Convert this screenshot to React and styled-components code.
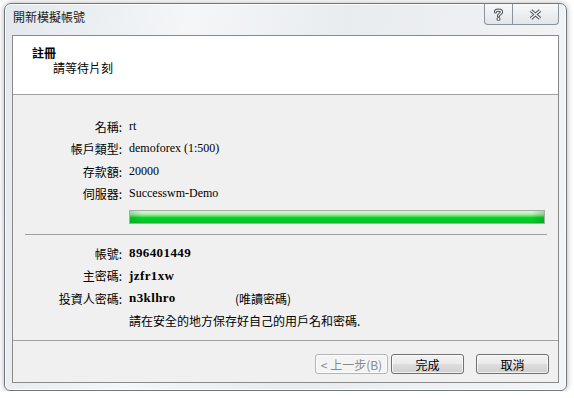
import { Fragment } from "react";
import styled, { createGlobalStyle } from "styled-components";

const Global = createGlobalStyle`
  body {
    margin: 0;
    background: #fff;
    font-family: "Noto Sans CJK TC", "Noto Sans", sans-serif;
    font-size: 12px;
    color: #000;
  }
`;

const Window = styled.div`
  margin: 3px 0 0 4px;
  width: 563px;
  height: 388px;
  box-sizing: border-box;
  border: 1px solid #6e7680;
  border-radius: 7px 7px 6px 6px;
  background: linear-gradient(100deg, #e4e8ec 0%, #f4f6f8 30%, #e9ecef 55%, #f3f4f6 100%);
  box-shadow: 0 0 6px rgba(0, 0, 0, 0.3), inset 0 0 0 1px rgba(255, 255, 255, 0.8);
  padding: 0 7px 7px;
  display: flex;
  flex-direction: column;
`;

const TitleBar = styled.div`
  height: 31px;
  display: flex;
  align-items: flex-start;
  justify-content: space-between;
`;

const Title = styled.div`
  padding: 5px 0 0 1px;
  font-size: 12px;
  line-height: 16px;
  color: #1a1a1a;
`;

const Caption = styled.div`
  display: flex;
`;

const CapButton = styled.div`
  width: ${(p) => p.$w}px;
  height: 21px;
  box-sizing: border-box;
  border: 1px solid #8d939b;
  border-top: none;
  border-left: ${(p) => (p.$first ? "1px solid #8d939b" : "none")};
  border-radius: ${(p) => (p.$first ? "0 0 0 4px" : "0 0 4px 0")};
  background: linear-gradient(#f8f9fa, #eceef1 50%, #e2e5e9);
  display: flex;
  align-items: center;
  justify-content: center;
`;

const Client = styled.div`
  flex: 1;
  border: 1px solid #8a8a8a;
  background: #f0f0f0;
  display: flex;
  flex-direction: column;
`;

const Header = styled.div`
  height: 59px;
  box-sizing: border-box;
  background: #fff;
  border-bottom: 1px solid #a0a0a0;
  padding: 9px 0 0 19px;
`;

const HeadTitle = styled.div`
  font-weight: bold;
  font-size: 12px;
  line-height: 15px;
`;

const HeadSub = styled.div`
  padding-left: 21px;
  font-size: 12px;
  line-height: 15px;
`;

const Body = styled.div`
  flex: 1;
  padding-top: 20px;
`;

const Form = styled.div`
  display: grid;
  grid-template-columns: 109px 1fr;
  grid-auto-rows: 22.5px;
  column-gap: 7px;
  align-items: center;
`;

const Label = styled.div`
  text-align: right;
  white-space: nowrap;
`;

const Value = styled.div`
  font-family: "Liberation Serif", "Noto Sans CJK TC", serif;
  font-size: ${(p) => (p.$bold ? "13px" : "12px")};
  font-weight: ${(p) => (p.$bold ? "bold" : "normal")};
  letter-spacing: ${(p) => (p.$bold ? "0.4px" : "0")};
  display: flex;
  align-items: center;
`;

const Secret = styled.span`
  width: 106px;
`;

const Note = styled.span`
  font-family: "Noto Sans CJK TC", sans-serif;
  font-weight: normal;
  font-size: 12px;
  letter-spacing: 0;
`;

const Notice = styled.div`
  font-size: 12px;
  white-space: nowrap;
`;

const Progress = styled.div`
  margin: 5px 0 0 116px;
  width: 416px;
  height: 14px;
  box-sizing: border-box;
  border: 1px solid #a9aaa9;
  background:
    linear-gradient(90deg, rgba(0, 80, 0, 0.18), rgba(0, 0, 0, 0) 3%, rgba(0, 0, 0, 0) 97%, rgba(0, 80, 0, 0.2)),
    linear-gradient(#d6f8d2 0%, #b4f0b1 25%, #4fde5c 45%, #06d22a 55%, #04c925 85%, #17b42f 100%);
`;

const Rule = styled.div`
  height: 1px;
  background: #a0a0a0;
  margin: ${(p) => p.$m || "0"};
`;

const Footer = styled.div`
  height: 42px;
  box-sizing: border-box;
  border-top: 1px solid #a0a0a0;
  display: flex;
  justify-content: flex-end;
  align-items: flex-start;
  padding: 13px 9px 0 0;
`;

const Button = styled.div`
  width: 73px;
  height: 20px;
  box-sizing: border-box;
  margin-left: ${(p) => p.$gap || 0}px;
  border: 1px solid ${(p) => (p.$disabled ? "#b2b6ba" : "#707070")};
  border-radius: 3px;
  background: ${(p) =>
    p.$disabled
      ? "#f4f4f4"
      : "linear-gradient(#f2f2f2 0%, #ebebeb 48%, #dddddd 52%, #cfcfcf 100%)"};
  box-shadow: inset 0 0 0 1px rgba(255, 255, 255, 0.7);
  color: ${(p) => (p.$disabled ? "#8a8a8a" : "#000")};
  font-size: 12px;
  display: flex;
  align-items: center;
  justify-content: center;
`;

// outlined glyphs of the Aero caption buttons
const HelpIcon = () => (
  <svg width="11" height="13" viewBox="0 0 11 13">
    <path d="M2.5 4 C2.5 1.5 8.5 1.5 8.5 4 C8.5 6 5.5 6 5.5 8" fill="none" stroke="#4b5059" strokeWidth="3.2" strokeLinecap="round" />
    <path d="M2.5 4 C2.5 1.5 8.5 1.5 8.5 4 C8.5 6 5.5 6 5.5 8" fill="none" stroke="#f4f5f7" strokeWidth="1.2" strokeLinecap="round" />
    <circle cx="5.5" cy="11" r="1.6" fill="#f4f5f7" stroke="#4b5059" strokeWidth="1" />
  </svg>
);

const CloseIcon = () => (
  <svg width="13" height="11" viewBox="0 0 13 11">
    <path d="M2 1.5 L11 9.5 M11 1.5 L2 9.5" fill="none" stroke="#4b5059" strokeWidth="3.4" />
    <path d="M2 1.5 L11 9.5 M11 1.5 L2 9.5" fill="none" stroke="#f4f5f7" strokeWidth="1.4" />
  </svg>
);

const rows1 = [
  ["名稱:", "rt"],
  ["帳戶類型:", "demoforex (1:500)"],
  ["存款額:", "20000"],
  ["伺服器:", "Successwm-Demo"],
];

export default function App() {
  return (
    <>
      <Global />
      <Window>
        <TitleBar>
          <Title>開新模擬帳號</Title>
          <Caption>
            <CapButton $w={29} $first><HelpIcon /></CapButton>
            <CapButton $w={46}><CloseIcon /></CapButton>
          </Caption>
        </TitleBar>
        <Client>
          <Header>
            <HeadTitle>註冊</HeadTitle>
            <HeadSub>請等待片刻</HeadSub>
          </Header>
          <Body>
            <Form>
              {rows1.map(([k, v]) => (
                <Fragment key={k}>
                  <Label>{k}</Label>
                  <Value>{v}</Value>
                </Fragment>
              ))}
            </Form>
            <Progress />
            <Rule $m="10px 11px 7px 12px" />
            <Form>
              <Label>帳號:</Label>
              <Value $bold>896401449</Value>
              <Label>主密碼:</Label>
              <Value $bold>jzfr1xw</Value>
              <Label>投資人密碼:</Label>
              <Value $bold>
                <Secret>n3klhro</Secret>
                <Note>(唯讀密碼)</Note>
              </Value>
              <span />
              <Notice>請在安全的地方保存好自己的用戶名和密碼.</Notice>
            </Form>
          </Body>
          <Footer>
            <Button $disabled>&lt; 上一步(B)</Button>
            <Button $gap={3}>完成</Button>
            <Button $gap={12}>取消</Button>
          </Footer>
        </Client>
      </Window>
    </>
  );
}
